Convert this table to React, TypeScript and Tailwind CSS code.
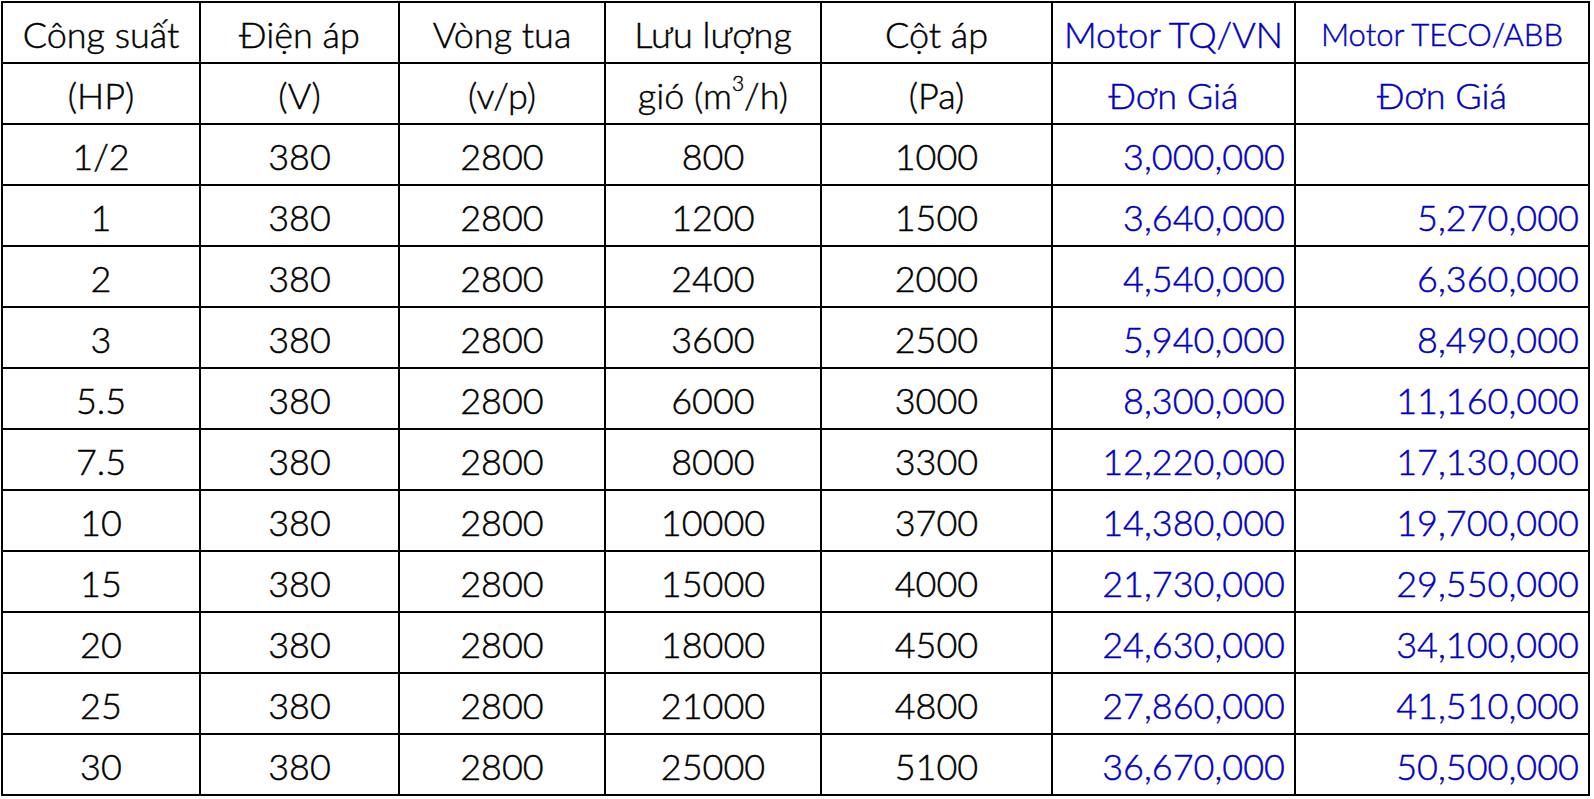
const rows: [string, string, string, string, string, string, string][] = [
  ['1/2', '380', '2800', '800', '1000', '3,000,000', ''],
  ['1', '380', '2800', '1200', '1500', '3,640,000', '5,270,000'],
  ['2', '380', '2800', '2400', '2000', '4,540,000', '6,360,000'],
  ['3', '380', '2800', '3600', '2500', '5,940,000', '8,490,000'],
  ['5.5', '380', '2800', '6000', '3000', '8,300,000', '11,160,000'],
  ['7.5', '380', '2800', '8000', '3300', '12,220,000', '17,130,000'],
  ['10', '380', '2800', '10000', '3700', '14,380,000', '19,700,000'],
  ['15', '380', '2800', '15000', '4000', '21,730,000', '29,550,000'],
  ['20', '380', '2800', '18000', '4500', '24,630,000', '34,100,000'],
  ['25', '380', '2800', '21000', '4800', '27,860,000', '41,510,000'],
  ['30', '380', '2800', '25000', '5100', '36,670,000', '50,500,000'],
]

function Cell({
  children,
  align = 'center',
  blue,
  small,
}: {
  children?: React.ReactNode
  align?: 'center' | 'right'
  blue?: boolean
  small?: boolean
}) {
  return (
    <div
      className={`flex h-[61px] items-center whitespace-nowrap border-b-2 border-r-2 border-black pt-[3px] ${
        align === 'right' ? 'justify-end pr-[9px]' : 'justify-center'
      } ${blue ? 'text-[#0000c4]' : 'text-black'} ${small ? 'text-[31px]' : 'text-[36px]'}`}
    >
      {children}
    </div>
  )
}

export default function App() {
  return (
    <div
      className="min-h-screen bg-white pl-[1px] pt-[1px] font-light [-webkit-text-stroke:0.45px]"
      style={{ fontFamily: 'Lato, "Open Sans", sans-serif' }}
    >
      <div className="grid w-max grid-cols-[198px_199px_206px_216px_231px_243px_294px] border-l-2 border-t-2 border-black leading-none">
        <Cell>Công suất</Cell>
        <Cell>Điện áp</Cell>
        <Cell>Vòng tua</Cell>
        <Cell>Lưu lượng</Cell>
        <Cell>Cột áp</Cell>
        <Cell blue>Motor TQ/VN</Cell>
        <Cell blue small>Motor TECO/ABB</Cell>

        <Cell>(HP)</Cell>
        <Cell>(V)</Cell>
        <Cell>(v/p)</Cell>
        <Cell>
          gió (m<span className="relative -top-[13px] text-[21px]">3</span>/h)
        </Cell>
        <Cell>(Pa)</Cell>
        <Cell blue>Đơn Giá</Cell>
        <Cell blue>Đơn Giá</Cell>

        {rows.map((r, i) =>
          r.map((v, j) => (
            <Cell key={`${i}-${j}`} align={j >= 5 ? 'right' : 'center'} blue={j >= 5}>
              {v}
            </Cell>
          ))
        )}
      </div>
    </div>
  )
}
